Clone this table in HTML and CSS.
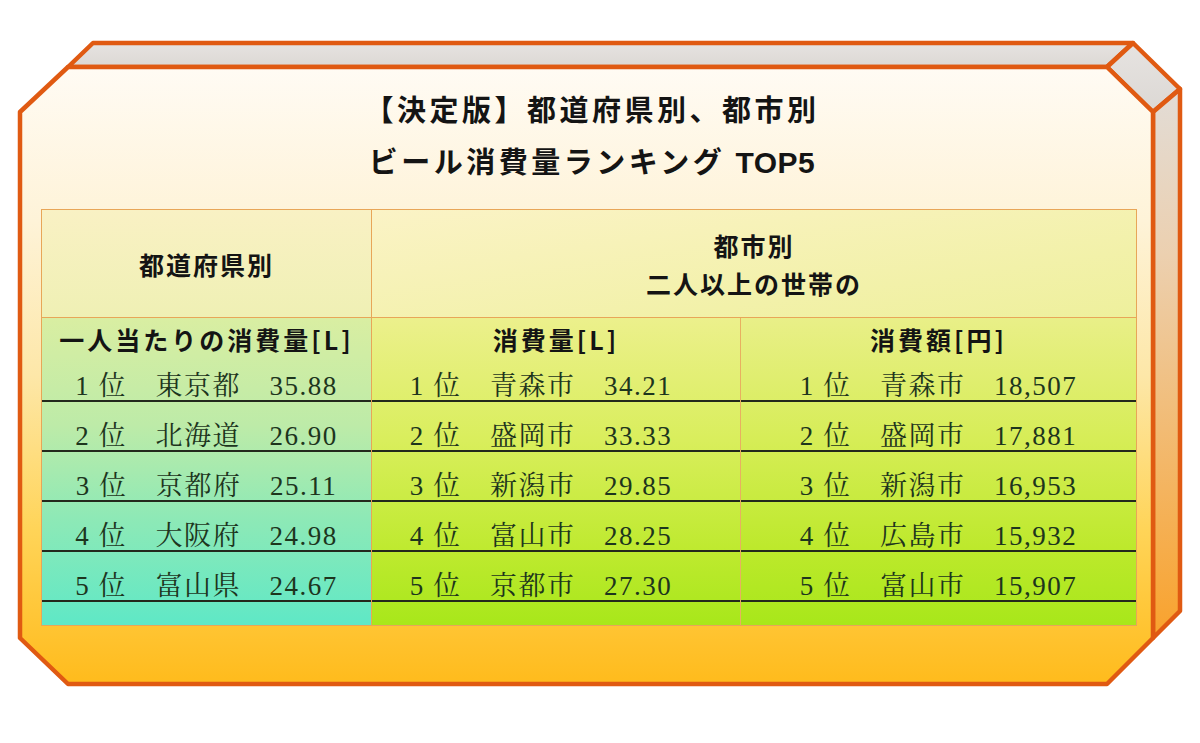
FILE: index.html
```html
<!DOCTYPE html>
<html lang="ja">
<head>
<meta charset="utf-8">
<title>ビール消費量ランキング TOP5</title>
<link rel="stylesheet" href="styles.css">
</head>
<body>
<div class="stage">
  <svg class="frame" width="1200" height="743" viewBox="0 0 1200 743" aria-hidden="true">
    <defs>
      <linearGradient id="gFront" x1="0" y1="0" x2="0" y2="1">
        <stop offset="0" stop-color="#fffbf4"/>
        <stop offset="0.25" stop-color="#fef3d8"/>
        <stop offset="0.5" stop-color="#fde7a8"/>
        <stop offset="0.75" stop-color="#ffd458"/>
        <stop offset="1" stop-color="#ffbb1c"/>
      </linearGradient>
      <linearGradient id="gTop" x1="0" y1="0" x2="0" y2="1">
        <stop offset="0" stop-color="#e6e3e1"/>
        <stop offset="1" stop-color="#dcd8d4"/>
      </linearGradient>
      <linearGradient id="gSide" x1="0" y1="0" x2="0" y2="1">
        <stop offset="0" stop-color="#e2dcd6"/>
        <stop offset="0.3" stop-color="#ecd0b0"/>
        <stop offset="1" stop-color="#f9a22c"/>
      </linearGradient>
    </defs>
    <g stroke="#e05a12" stroke-width="4.5" stroke-linejoin="round">
      <polygon points="93,43 1133,43 1107,67 68,67" fill="url(#gTop)"/>
      <polygon points="1107,67 1133,43 1180,89 1153,112" fill="url(#gTop)"/>
      <polygon points="1153,112 1180,89 1180,611 1153,638" fill="url(#gSide)"/>
      <polygon points="68,67 1107,67 1153,112 1153,638 1107,684 68,684 20,638 20,112" fill="url(#gFront)"/>
    </g>
  </svg>

  <div class="panel">
    <h1 class="title">【決定版】都道府県別、都市別<br>ビール消費量ランキング <span class="latin">TOP5</span></h1>

    <div class="table">
      <div class="head head-pref">都道府県別</div>
      <div class="head head-city">都市別<br>二人以上の世帯の</div>

      <div class="col col-pref">
        <div class="sub">一人当たりの消費量[L]</div>
        <div class="row">1 位　東京都　35.88</div>
        <div class="row">2 位　北海道　26.90</div>
        <div class="row">3 位　京都府　25.11</div>
        <div class="row">4 位　大阪府　24.98</div>
        <div class="row">5 位　富山県　24.67</div>
      </div>

      <div class="col col-vol">
        <div class="sub">消費量[L]</div>
        <div class="row">1 位　青森市　34.21</div>
        <div class="row">2 位　盛岡市　33.33</div>
        <div class="row">3 位　新潟市　29.85</div>
        <div class="row">4 位　富山市　28.25</div>
        <div class="row">5 位　京都市　27.30</div>
      </div>

      <div class="col col-yen">
        <div class="sub">消費額[円]</div>
        <div class="row">1 位　青森市　18,507</div>
        <div class="row">2 位　盛岡市　17,881</div>
        <div class="row">3 位　新潟市　16,953</div>
        <div class="row">4 位　広島市　15,932</div>
        <div class="row">5 位　富山市　15,907</div>
      </div>
    </div>
  </div>
</div>
</body>
</html>
```

FILE: styles.css
```css
html, body {
  margin: 0;
  padding: 0;
  background: #ffffff;
}

.stage {
  position: relative;
  width: 1200px;
  height: 743px;
  overflow: hidden;
}

.frame {
  position: absolute;
  left: 0;
  top: 0;
}

.panel {
  position: relative;
  box-sizing: border-box;
  width: 1137px;
  padding: 82px 0 0 41px;
}

.title {
  margin: 0;
  height: 104px;
  padding-left: 6px;
  font-family: "Noto Sans CJK JP", "Noto Sans", sans-serif;
  font-weight: 700;
  font-size: 29px;
  line-height: 52px;
  letter-spacing: 3.5px;
  text-align: center;
  color: #141414;
}

.title .latin {
  font-family: "Liberation Sans", "Noto Sans CJK JP", sans-serif;
  font-size: 30px;
  letter-spacing: 0.5px;
}

.table {
  box-sizing: border-box;
  margin-top: 23px;
  width: 1096px;
  display: grid;
  grid-template-columns: 330px 369px 395px;
  grid-template-rows: 108px 307px;
  border: 1px solid #e8a658;
}

.head {
  display: flex;
  align-items: center;
  justify-content: center;
  text-align: center;
  font-family: "Noto Sans CJK JP", "Noto Sans", sans-serif;
  font-weight: 700;
  font-size: 25px;
  letter-spacing: 2px;
  color: #141414;
  border-bottom: 1px solid #e8a658;
}

.head-pref {
  box-sizing: border-box;
  border-right: 1px solid #e8a658;
  background: linear-gradient(to bottom, #f9f1c4, #eff0b4);
}

.head-city {
  grid-column: 2 / 4;
  line-height: 38px;
  background: linear-gradient(to bottom right, #fbf3c6, #eef09c);
}

.col {
  box-sizing: border-box;
  display: flex;
  flex-direction: column;
}

.col-pref {
  border-right: 1px solid #e8a658;
  background: linear-gradient(to bottom, #d9eea2 0%, #bdeba8 35%, #8ee9b6 65%, #5fe8c6 100%);
}

.col-vol {
  border-right: 1px solid #e8b060;
  background: linear-gradient(to bottom, #ecf08c 0%, #d9ee5c 40%, #bfea30 75%, #a8e71a 100%);
}

.col-yen {
  background: linear-gradient(to bottom, #e9ef88 0%, #d6ed56 40%, #bde92c 75%, #a8e71a 100%);
}

.sub {
  box-sizing: border-box;
  height: 34px;
  padding-top: 7px;
  line-height: 28px;
  text-align: center;
  font-family: "Noto Sans CJK JP", "Noto Sans", sans-serif;
  font-weight: 700;
  font-size: 25px;
  letter-spacing: 3px;
  color: #141414;
  white-space: nowrap;
}

.row {
  box-sizing: border-box;
  height: 50px;
  display: flex;
  align-items: flex-end;
  justify-content: center;
  border-bottom: 2px solid #23281c;
  font-family: "Liberation Serif", "Noto Serif CJK JP", "Noto Sans CJK JP", serif;
  font-size: 27px;
  line-height: 27px;
  letter-spacing: 1.5px;
  color: #1d351d;
  white-space: nowrap;
}

.col-vol .row {
  padding-right: 30px;
}
```
